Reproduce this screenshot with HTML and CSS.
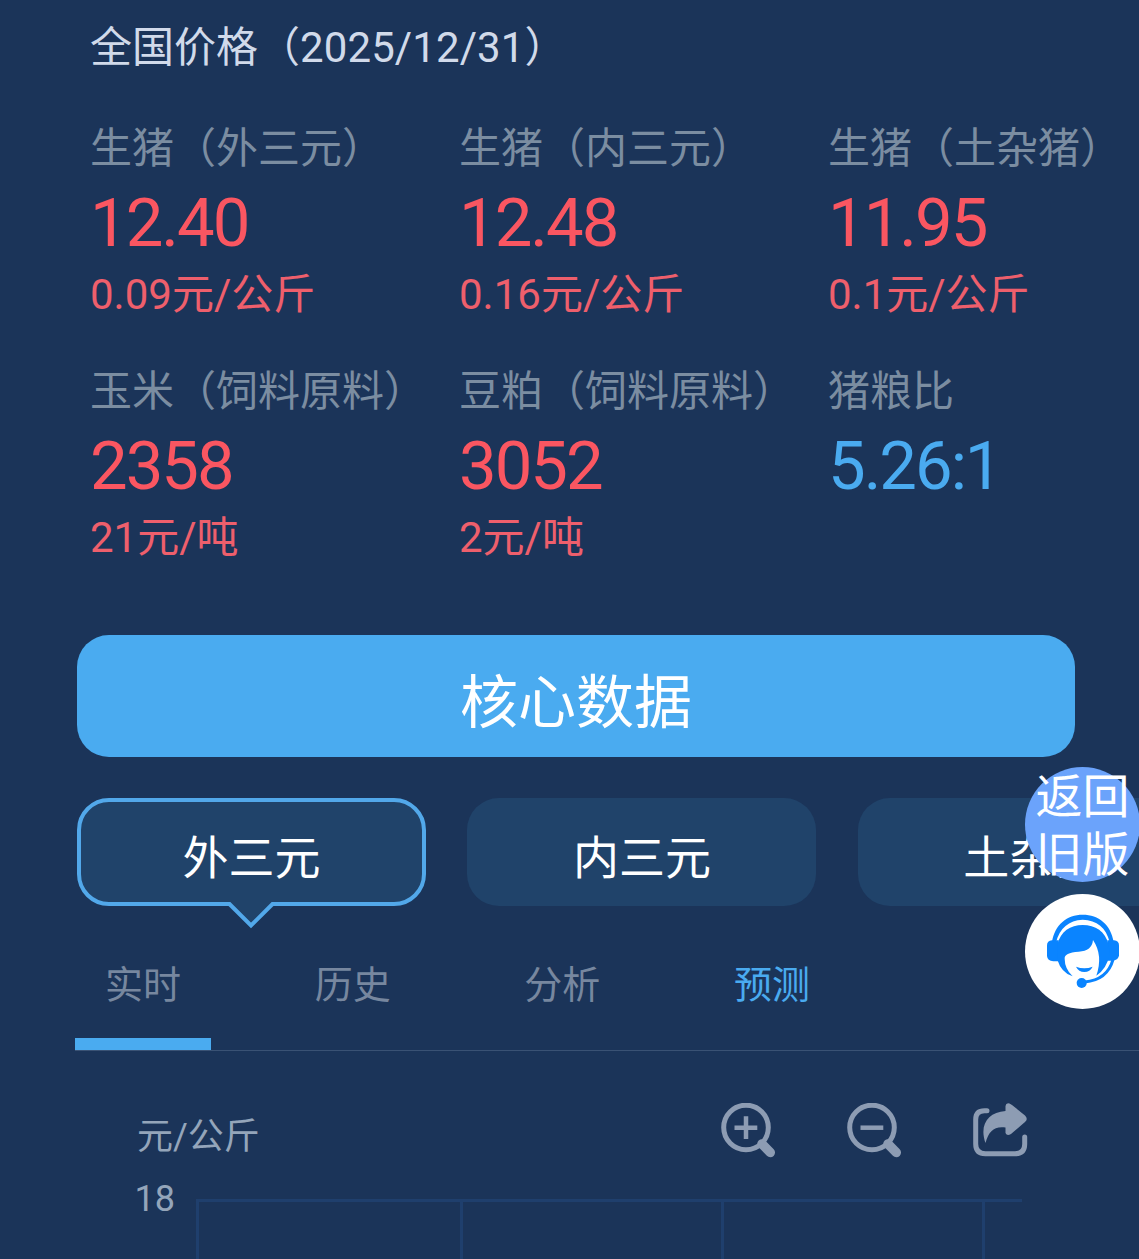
FILE: index.html
```html
<!DOCTYPE html>
<html lang="zh-CN">
<head>
  <meta charset="UTF-8">
  <meta name="viewport" content="width=device-width, initial-scale=1.0">
  <title>全国价格</title>
  <link rel="stylesheet" href="styles.css">
</head>
<body>
  <div class="page">
    <h1 class="title">全国价格（<span class="date">2025/12/31</span>）</h1>

    <div class="prices">
      <div class="price">
        <div class="name">生猪（外三元）</div>
        <div class="value">12.40</div>
        <div class="change">0.09元/公斤</div>
      </div>
      <div class="price">
        <div class="name">生猪（内三元）</div>
        <div class="value">12.48</div>
        <div class="change">0.16元/公斤</div>
      </div>
      <div class="price">
        <div class="name">生猪（土杂猪）</div>
        <div class="value">11.95</div>
        <div class="change">0.1元/公斤</div>
      </div>
      <div class="price">
        <div class="name">玉米（饲料原料）</div>
        <div class="value">2358</div>
        <div class="change">21元/吨</div>
      </div>
      <div class="price">
        <div class="name">豆粕（饲料原料）</div>
        <div class="value">3052</div>
        <div class="change">2元/吨</div>
      </div>
      <div class="price">
        <div class="name">猪粮比</div>
        <div class="value ratio">5.26:1</div>
      </div>
    </div>

    <button class="core-btn">核心数据</button>

    <div class="types">
      <div class="type active">外三元
        <svg class="arrow" width="48" height="28" viewBox="0 0 48 28">
          <path d="M1 0H47V4L24 26L1 4Z" fill="#20436a"/>
          <path d="M0 2H2.500L24 23.500L45.500 2H48" fill="none" stroke="#52a8ea" stroke-width="4"/>
        </svg>
      </div>
      <div class="type">内三元</div>
      <div class="type">土杂猪</div>
    </div>

    <div class="tabs">
      <div class="tab current">实时</div>
      <div class="tab">历史</div>
      <div class="tab">分析</div>
      <div class="tab forecast">预测</div>
    </div>

    <div class="chart-head">
      <span class="unit">元/公斤</span>
      <div class="tools">
        <svg width="56" height="56" viewBox="0 0 56 56" fill="none" stroke="#8d9cb3">
          <circle cx="26" cy="24.500" r="22.300" stroke-width="5"/>
          <path d="M26 13.300V36M14.500 24.700H37.300" stroke-width="4.500"/>
          <path d="M42 41L50.300 49.500" stroke-width="9.500" stroke-linecap="round"/>
        </svg>
        <svg width="56" height="56" viewBox="0 0 56 56" fill="none" stroke="#8d9cb3">
          <circle cx="26" cy="24.500" r="22.300" stroke-width="5"/>
          <path d="M14.500 24.700H37.300" stroke-width="4.500"/>
          <path d="M42 41L50.300 49.500" stroke-width="9.500" stroke-linecap="round"/>
        </svg>
        <svg width="56" height="56" viewBox="0 0 56 56">
          <path d="M15 7.700H12.500Q3.700 7.700 3.700 16.500V41Q3.700 50.700 13.400 50.700H43Q52.700 50.700 52.700 41V34" fill="none" stroke="#8d9cb3" stroke-width="5" stroke-linecap="round"/>
          <path d="M33.500 8V3Q34 -0.500 37.500 0.500L40 2L53 12.500Q56.500 16 53 19L39 31Q35 33.500 33.500 30V24.500C22 23 17 28 13.500 40C7 22 16 9 33.500 8Z" fill="#8d9cb3"/>
        </svg>
      </div>
    </div>

    <div class="chart">
      <span class="y-label">18</span>
      <div class="plot">
        <div></div>
        <div></div>
        <div></div>
        <div></div>
      </div>
    </div>

    <div class="floats">
      <div class="old-version">返回<br>旧版</div>
      <div class="service">
        <svg width="82" height="86" viewBox="0 0 246 258" fill="#0a84ff">
          <path d="M30 102C38 50 75 20 122 20C170 20 207 50 215 102L203 102C192 58 165 37 122 35C80 37 54 60 42 102Z"/>
          <path d="M50 97H30Q15 98 15 112V144Q16 158 34 160H52Z"/>
          <path d="M196 97H216Q231 98 231 112V142Q230 156 212 158H198Z"/>
          <path d="M46 110C56 70 85 51 122 51C160 51 190 70 200 110L203 140Q194 182 163 203Q184 142 153 96Q150 129 110 131Q66 134 68 152Q68 182 92 205Q58 194 46 155Z"/>
          <path d="M102 176Q127 186 152 176Q144 192 127 192Q110 192 102 176Z"/>
          <path d="M213 155Q196 216 128 222" fill="none" stroke="#0a84ff" stroke-width="9"/>
          <circle cx="119" cy="225" r="15"/>
        </svg>
      </div>
    </div>
  </div>
</body>
</html>
```

FILE: styles.css
```css
* {
  box-sizing: border-box;
}

body {
  margin: 0;
  background: #1b3459;
  font-family: "Noto Sans CJK SC", sans-serif;
}

.page {
  position: relative;
  height: 1259px;
  overflow: hidden;
  padding-top: 18px;
}

.title,
.value,
.change,
.unit,
.y-label {
  font-family: Roboto, "Noto Sans CJK SC", sans-serif;
}

.title {
  margin: 0 0 37px 90px;
  font-size: 42px;
  font-weight: 400;
  line-height: 60px;
  color: #d1daea;
}

.date {
  letter-spacing: 0.1px;
}

.prices {
  display: grid;
  grid-template-columns: 369px 369px 311px;
  row-gap: 40px;
  padding-left: 90px;
  white-space: nowrap;
}

.name {
  font-size: 42px;
  line-height: 60px;
  color: #7b8da1;
}

.value {
  font-size: 67px;
  line-height: 97px;
  letter-spacing: -2px;
  color: #fa5661;
}

.change {
  font-size: 42px;
  line-height: 46px;
  color: #ee5f6c;
}

.value.ratio {
  color: #4aabf0;
}

.core-btn {
  display: block;
  width: 998px;
  height: 122px;
  margin: 74px 0 0 77px;
  padding: 4px 0 0;
  border: none;
  border-radius: 32px;
  background: #4aabf0;
  color: #fff;
  font-family: inherit;
  font-size: 58px;
  line-height: 1;
}

.types {
  display: flex;
  gap: 41.4px;
  margin-top: 41px;
  padding-left: 77px;
}

.type {
  position: relative;
  flex: none;
  width: 349px;
  height: 108px;
  border-radius: 32px;
  background: #20436a;
  color: #fff;
  font-size: 46px;
  line-height: 112px;
  text-align: center;
}

.type.active {
  border: 4px solid #52a8ea;
  line-height: 104px;
}

/* pointer under the selected type */
.arrow {
  position: absolute;
  left: 146px;
  top: 100px;
}

.tabs {
  display: flex;
  gap: 73.7px;
  height: 145px;
  margin-left: 75px;
  padding-top: 46px;
  border-bottom: 1px solid #3a5274;
}

.tab {
  width: 136px;
  font-size: 38px;
  line-height: 60px;
  text-align: center;
  color: #77879f;
}

.tab.current {
  border-bottom: 12px solid #4aabf0;
}

.tab.forecast {
  color: #4aabf0;
}

.chart-head {
  display: flex;
  justify-content: space-between;
  height: 112px;
  padding: 52px 111px 0 137px;
}

.unit {
  padding-top: 4px;
  font-size: 36px;
  line-height: 60px;
  color: #94a5ba;
}

.tools {
  display: flex;
  gap: 70px;
}

.chart {
  display: flex;
  margin-top: 16px;
}

.y-label {
  width: 196px;
  padding-right: 21px;
  font-size: 36px;
  line-height: 40px;
  text-align: right;
  color: #94a5ba;
}

.plot {
  display: grid;
  grid-template-columns: 264px 261px 261px 40px;
  height: 80px;
  margin-top: 20px;
  border-top: 3px solid #1f3f6d;
}

.plot div {
  border-left: 3px solid #1f3f6d;
}

.floats {
  position: absolute;
  top: 767px;
  right: -1px;
}

.old-version,
.service {
  width: 115px;
  height: 115px;
  border-radius: 50%;
}

.old-version {
  display: flex;
  flex-direction: column;
  justify-content: center;
  padding-bottom: 6px;
  background: #6ba3fb;
  color: #fff;
  font-size: 47px;
  line-height: 58px;
  text-align: center;
  white-space: nowrap;
}

.service {
  margin-top: 12px;
  padding: 14px 0 0 17px;
  background: #fff;
}
```
